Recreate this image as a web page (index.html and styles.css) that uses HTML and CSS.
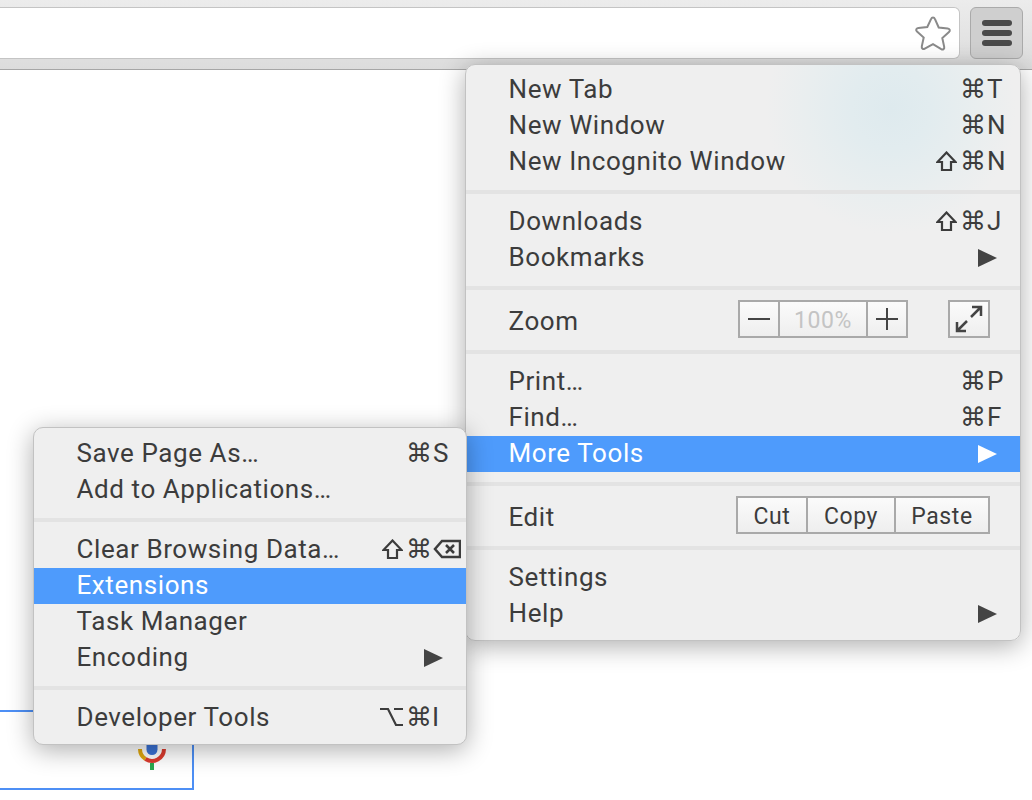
FILE: index.html
```html
<!DOCTYPE html>
<html lang="en">

<head>
  <meta charset="UTF-8">
  <meta name="viewport" content="width=device-width, initial-scale=1.0">
  <title>Chrome Menu</title>
  <link rel="stylesheet" href="styles.css">
</head>

<body>
  <div class="toolbar">
    <div class="omnibox">
      <svg class="star" width="38" height="38" viewBox="0 0 38 38">
        <path d="M19 3.500c1 0 1.600.7 2 1.700l3.700 8.300 9 1c2.200.3 2.800 2.100 1.300 3.500l-6.700 6 1.900 8.900c.4 2.100-1.200 3.200-3 2.200L19 30.100l-8.200 4.500c-1.800 1-3.400-.1-3-2.200l1.900-8.900-6.700-6c-1.500-1.400-.9-3.200 1.300-3.500l9-1L17 5.200c.4-1 1-1.700 2-1.700z" fill="#fff" stroke="#8a8a8a" stroke-width="2"/>
      </svg>
    </div>
    <div class="menu-button">
      <span></span><span></span><span></span>
    </div>
  </div>

  <div class="search-box">
    <svg class="mic" width="30" height="32" viewBox="0 0 30 32">
      <rect x="9.500" y="0" width="11" height="17" rx="5.500" fill="#3b73d6"/>
      <path d="M3 11a12 12 0 0 0 5.500 10" fill="none" stroke="#e0a80f" stroke-width="4"/>
      <path d="M8.500 21a12 12 0 0 0 18.500-10" fill="none" stroke="#dc3b2e" stroke-width="4"/>
      <rect x="13" y="25" width="4" height="7" fill="#2ba94f"/>
    </svg>
  </div>

  <div class="menu main-menu">
    <div class="section first">
      <div class="row"><span>New Tab</span><div class="keys"><div class="key"><span>⌘</span><span>T</span></div></div></div>
      <div class="row"><span>New Window</span><div class="keys"><div class="key"><span>⌘</span><span>N</span></div></div></div>
      <div class="row"><span>New Incognito Window</span>
        <div class="keys">
          <svg class="mod" width="21" height="20" viewBox="0 0 21 20"><path d="M10.500 1.500L19.500 11H15v8H6v-8H1.500z" /></svg>
          <div class="key"><span>⌘</span><span>N</span></div>
        </div>
      </div>
    </div>
    <div class="section">
      <div class="row"><span>Downloads</span>
        <div class="keys">
          <svg class="mod" width="21" height="20" viewBox="0 0 21 20"><path d="M10.500 1.500L19.500 11H15v8H6v-8H1.500z" /></svg>
          <div class="key"><span>⌘</span><span>J</span></div>
        </div>
      </div>
      <div class="row"><span>Bookmarks</span><span class="arrow"></span></div>
    </div>
    <div class="section tall">
      <div class="row"><span>Zoom</span>
        <div class="controls">
          <div class="btn-group zoom-group">
            <div class="btn btn-minus"><i class="minus"></i></div>
            <div class="btn btn-level">100%</div>
            <div class="btn btn-plus"><i class="plus"></i></div>
          </div>
          <div class="btn btn-full">
            <svg width="38" height="34" viewBox="0 0 38 34">
              <path d="M7 29L17 19M7 20v9h9M31 5L21 15M22 5h9v9" fill="none" stroke="#444" stroke-width="2.500"/>
            </svg>
          </div>
        </div>
      </div>
    </div>
    <div class="section">
      <div class="row"><span>Print…</span><div class="keys"><div class="key"><span>⌘</span><span>P</span></div></div></div>
      <div class="row"><span>Find…</span><div class="keys"><div class="key"><span>⌘</span><span>F</span></div></div></div>
      <div class="row active"><span>More Tools</span><span class="arrow"></span></div>
    </div>
    <div class="section tall">
      <div class="row"><span>Edit</span>
        <div class="btn-group edit-group">
          <div class="btn btn-cut">Cut</div>
          <div class="btn btn-copy">Copy</div>
          <div class="btn btn-paste">Paste</div>
        </div>
      </div>
    </div>
    <div class="section">
      <div class="row"><span>Settings</span></div>
      <div class="row"><span>Help</span><span class="arrow"></span></div>
    </div>
  </div>

  <div class="menu sub-menu">
    <div class="section first">
      <div class="row"><span>Save Page As…</span><div class="keys"><div class="key"><span>⌘</span><span>S</span></div></div></div>
      <div class="row"><span>Add to Applications…</span></div>
    </div>
    <div class="section">
      <div class="row"><span>Clear Browsing Data…</span>
        <div class="keys">
          <svg class="mod" width="21" height="20" viewBox="0 0 21 20"><path d="M10.500 1.500L19.500 11H15v8H6v-8H1.500z" /></svg>
          <div class="key"><span>⌘</span>
            <svg class="mod delete" width="28" height="20" viewBox="0 0 28 20"><path d="M9 2H27V18H9L2 10zM13 6l8 8M21 6l-8 8" /></svg>
          </div>
        </div>
      </div>
      <div class="row active"><span>Extensions</span></div>
      <div class="row"><span>Task Manager</span></div>
      <div class="row"><span>Encoding</span><span class="arrow"></span></div>
    </div>
    <div class="section">
      <div class="row"><span>Developer Tools</span>
        <div class="keys">
          <svg class="mod" width="23" height="20" viewBox="0 0 23 20"><path d="M0 2H8L16 18H23M14 2H23" /></svg>
          <div class="key"><span>⌘</span><span class="letter-i">I</span></div>
        </div>
      </div>
    </div>
  </div>
</body>

</html>
```

FILE: styles.css
```css
body {
  margin: 0;
  height: 800px;
  overflow: hidden;
  background-color: #fff;
  font-family: 'Roboto', 'DejaVu Sans', sans-serif;
  color: #3c3c3c;
}

.toolbar {
  display: flex;
  align-items: flex-start;
  gap: 10px;
  height: 62px;
  padding: 7px 9px 0 0;
  background: linear-gradient(#ececec, #dcdcdc);
  border-bottom: 1px solid #a6a6a6;
}

.omnibox {
  flex: 1;
  display: flex;
  justify-content: flex-end;
  align-items: center;
  height: 50px;
  padding-right: 7px;
  background-color: #fff;
  border: 1px solid #c4c4c4;
  border-left: none;
  border-radius: 0 6px 6px 0;
}

.menu-button {
  display: flex;
  flex-direction: column;
  justify-content: center;
  align-items: center;
  gap: 4px;
  width: 51px;
  height: 50px;
  background-color: #cfcfcf;
  border: 1px solid #aaa;
  border-radius: 6px;
}

.menu-button span {
  width: 30px;
  height: 6px;
  border-radius: 3px;
  background-color: #4a4a4a;
}

.search-box {
  position: relative;
  width: 192px;
  height: 76px;
  margin-top: 640px;
  border: 2px solid #4d8ff5;
  border-left: none;
}

.mic {
  position: absolute;
  left: 137px;
  top: 26px;
}

.menu {
  position: absolute;
  box-sizing: border-box;
  background-color: #efefef;
  border: 1px solid #c2c2c2;
  border-radius: 10px;
  box-shadow: 0 5px 26px rgba(0, 0, 0, 0.32);
  font-size: 26px;
  letter-spacing: 0.58px;
}

.main-menu {
  left: 465px;
  top: 64px;
  width: 556px;
  height: 577px;
  background: radial-gradient(circle at 425px 44px, #deeaee 0, #e2ecef 40px, #e9eeef 85px, #efefef 125px);
}

.sub-menu {
  left: 33px;
  top: 427px;
  width: 434px;
  height: 318px;
}

.section {
  padding: 10px 0 10px;
  border-top: 4px solid #e3e3e3;
}

.section.first {
  padding-top: 7px;
  border-top: none;
}

.sub-menu .section.first {
  padding-top: 8px;
}

.section.tall {
  padding-top: 14px;
}

.row {
  box-sizing: border-box;
  display: flex;
  justify-content: space-between;
  align-items: center;
  height: 36px;
  padding: 0 18px 2px 42.5px;
  white-space: nowrap;
}

.row.active {
  background-color: #4e9bfc;
  color: #fff;
}

.keys {
  display: flex;
  align-items: center;
  gap: 3px;
  letter-spacing: 0;
}

.key {
  display: flex;
  align-items: center;
  width: 42px;
}

.key span + span {
  margin-left: 1px;
}

.key span.letter-i {
  margin-left: 0;
}

.mod {
  fill: none;
  stroke: #3c3c3c;
  stroke-width: 2.2;
}

.delete {
  flex: none;
  margin-left: 1px;
  stroke-width: 2.5;
}

.arrow {
  width: 0;
  height: 0;
  margin: 2px 5px 0 0;
  border-left: 19px solid #444;
  border-top: 9px solid transparent;
  border-bottom: 9px solid transparent;
}

.row.active .arrow {
  border-left-color: #fff;
}

.controls {
  display: flex;
  gap: 40px;
  margin: -4px 12px 0 0;
}

.btn-group {
  display: flex;
}

.btn {
  box-sizing: border-box;
  display: flex;
  justify-content: center;
  align-items: center;
  height: 38px;
  padding-top: 3px;
  background: linear-gradient(#fbfbfb, #eeeeee);
  border: 2px solid #a9a9a9;
  border-left: none;
  font-size: 23px;
}

.btn:first-child {
  border-left: 2px solid #a9a9a9;
}

.btn-minus { width: 42px; padding-top: 0; }
.btn-level { width: 88px; color: #c4c4c4; }
.btn-plus { width: 40px; padding-top: 0; }

.btn-full {
  width: 42px;
  padding-top: 0;
  border-left: 2px solid #a9a9a9;
}

.minus {
  width: 22px;
  height: 2px;
  background-color: #444;
}

.plus {
  width: 22px;
  height: 22px;
  background: linear-gradient(#444, #444) center / 100% 2px no-repeat,
    linear-gradient(#444, #444) center / 2px 100% no-repeat;
}

.edit-group {
  margin: -4px 12px 0 0;
}

.btn-cut { width: 72px; }
.btn-copy { width: 88px; }
.btn-paste { width: 94px; }
```
